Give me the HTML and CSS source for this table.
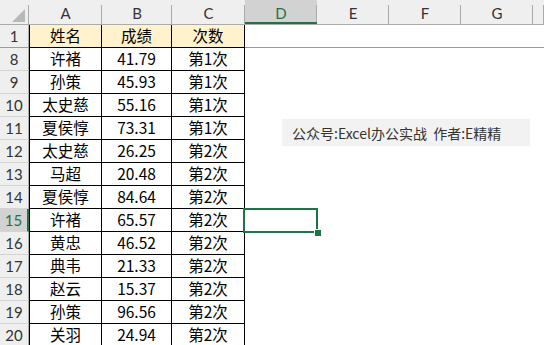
FILE: index.html
```html
<!DOCTYPE html>
<html lang="zh-CN">
<head>
<meta charset="utf-8">
<title>成绩表</title>
<link rel="stylesheet" href="styles.css">
</head>
<body>
<div class="sheet">
  <div class="colhead">
    <div class="corner"><svg width="29" height="24" viewBox="0 0 29 24"><polygon points="12,22 25,22 25,9" fill="#b9b9b9"/></svg></div>
    <div class="ch wa">A</div>
    <div class="ch wb">B</div>
    <div class="ch wc">C</div>
    <div class="ch wd sel">D</div>
    <div class="ch wd">E</div>
    <div class="ch wd">F</div>
    <div class="ch wd">G</div>
    <div class="ch rest"></div>
  </div>

  <div class="row r1"><div class="rh">1</div><div class="c wa first">姓名</div><div class="c wb">成绩</div><div class="c wc">次数</div><div class="rest"></div></div>
  <div class="row"><div class="rh">8</div><div class="c wa first">许褚</div><div class="c wb">41.79</div><div class="c wc">第1次</div><div class="rest"></div></div>
  <div class="row"><div class="rh">9</div><div class="c wa first">孙策</div><div class="c wb">45.93</div><div class="c wc">第1次</div><div class="rest"></div></div>
  <div class="row"><div class="rh">10</div><div class="c wa first">太史慈</div><div class="c wb">55.16</div><div class="c wc">第1次</div><div class="rest"></div></div>
  <div class="row"><div class="rh">11</div><div class="c wa first">夏侯惇</div><div class="c wb">73.31</div><div class="c wc">第1次</div><div class="rest"></div></div>
  <div class="row"><div class="rh">12</div><div class="c wa first">太史慈</div><div class="c wb">26.25</div><div class="c wc">第2次</div><div class="rest"></div></div>
  <div class="row"><div class="rh">13</div><div class="c wa first">马超</div><div class="c wb">20.48</div><div class="c wc">第2次</div><div class="rest"></div></div>
  <div class="row"><div class="rh">14</div><div class="c wa first">夏侯惇</div><div class="c wb">84.64</div><div class="c wc">第2次</div><div class="rest"></div></div>
  <div class="row"><div class="rh sel">15</div><div class="c wa first">许褚</div><div class="c wb">65.57</div><div class="c wc">第2次</div><div class="rest"></div></div>
  <div class="row"><div class="rh">16</div><div class="c wa first">黄忠</div><div class="c wb">46.52</div><div class="c wc">第2次</div><div class="rest"></div></div>
  <div class="row"><div class="rh">17</div><div class="c wa first">典韦</div><div class="c wb">21.33</div><div class="c wc">第2次</div><div class="rest"></div></div>
  <div class="row"><div class="rh">18</div><div class="c wa first">赵云</div><div class="c wb">15.37</div><div class="c wc">第2次</div><div class="rest"></div></div>
  <div class="row"><div class="rh">19</div><div class="c wa first">孙策</div><div class="c wb">96.56</div><div class="c wc">第2次</div><div class="rest"></div></div>
  <div class="row"><div class="rh">20</div><div class="c wa first">关羽</div><div class="c wb">24.94</div><div class="c wc">第2次</div><div class="rest"></div></div>

  <!-- active cell D15 with its fill handle -->
  <div class="cursor"><span class="handle"></span></div>

  <!-- floating text box -->
  <div class="note">公众号:Excel办公实战&nbsp; 作者:E精精</div>
</div>
</body>
</html>
```

FILE: styles.css
```css
* { box-sizing: border-box; }

html, body { margin: 0; padding: 0; }

body {
  width: 544px;
  height: 345px;
  overflow: hidden;
  background: #fff;
  font-family: "Noto Sans CJK SC", "Noto Sans", sans-serif;
  color: #000;
}

.sheet {
  position: relative;
  display: flex;
  flex-direction: column;
  width: 544px;
}

/* column header strip */
.colhead {
  display: flex;
  height: 25px;
  flex: none;
  background: #efefef;
  border-bottom: 1px solid #ababab;
}

.corner {
  width: 29px;
  flex: none;
  background: linear-gradient(#ababab, #ababab) right bottom / 1px 19px no-repeat;
}
.corner svg { display: block; }

.ch {
  flex: none;
  display: flex;
  align-items: center;
  justify-content: center;
  padding-top: 2px;
  font-family: "Lato", "Noto Sans", sans-serif;
  font-size: 15px;
  color: #333;
  background: linear-gradient(#ababab, #ababab) right bottom / 1px 19px no-repeat;
}
.ch.sel {
  background: linear-gradient(#ababab, #ababab) right bottom / 1px 19px no-repeat, #d2d2d2;
  color: #217346;
  box-shadow: inset 0 -2px 0 #217346;
}

.wa { width: 73px; }
.wb { width: 70px; }
.wc { width: 73px; }
.wd { width: 72px; }
.rest { flex: 1; }

/* body rows */
.row {
  display: flex;
  height: 23px;
  flex: none;
}

.rh {
  width: 29px;
  flex: none;
  display: flex;
  align-items: center;
  justify-content: center;
  background: #efefef;
  border-right: 1px solid #ababab;
  border-bottom: 1px solid #d4d4d4;
  font-family: "Lato", "Noto Sans", sans-serif;
  font-size: 15px;
  color: #333;
}
.rh.sel {
  background: #d2d2d2;
  color: #217346;
  border-right: 2px solid #217346;
}

.c {
  flex: none;
  display: flex;
  align-items: center;
  justify-content: center;
  border-right: 1px solid #000;
  border-bottom: 1px solid #000;
  font-size: 15.5px;
  line-height: 1;
}
.c.first { border-left: 1px solid #000; }

/* frozen header row */
.r1 .c { background: #fff2cc; }
.r1 .rest { border-bottom: 1px solid #9b9b9b; }
.r1 .rh { border-bottom-color: #9b9b9b; }

/* active cell outline */
.cursor {
  position: absolute;
  left: 243px;
  top: 208px;
  width: 75px;
  height: 25px;
  border: 2px solid #217346;
}
.handle {
  position: absolute;
  right: -6px;
  bottom: -6px;
  width: 8px;
  height: 8px;
  background: #217346;
  border: 1px solid #fff;
}

/* floating text box */
.note {
  position: absolute;
  left: 282px;
  top: 119px;
  width: 248px;
  height: 27px;
  padding-left: 10px;
  display: flex;
  align-items: center;
  background: #f2f2f2;
  font-size: 14px;
  color: #333;
  white-space: nowrap;
}
```
